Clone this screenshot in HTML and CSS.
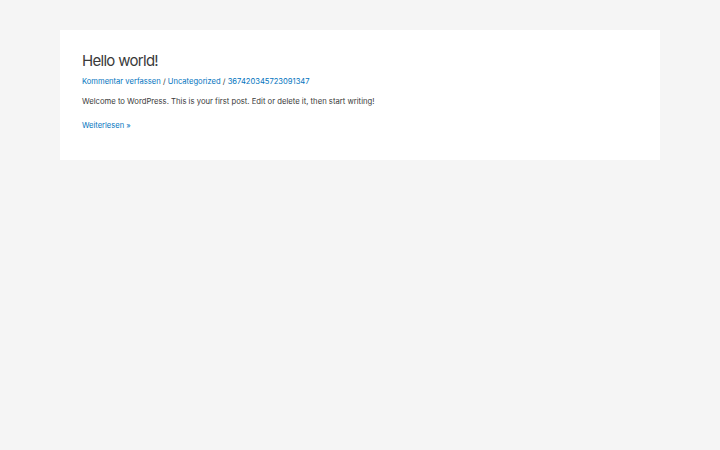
FILE: index.html
```html
<!DOCTYPE html>
<html lang="de">
<head>
<meta charset="utf-8">
<title>Hello world!</title>
<link rel="stylesheet" href="styles.css">
</head>
<body>
<main class="site">
  <article class="post">
    <h2 class="post-title">Hello world!</h2>
    <div class="post-meta"><a href="#">Kommentar verfassen</a> / <a href="#">Uncategorized</a> / <a href="#">367420345723091347</a></div>
    <p class="post-excerpt">Welcome to WordPress. This is your first post. Edit or delete it, then start writing!</p>
    <p class="read-more"><a href="#">Weiterlesen »</a></p>
  </article>
</main>
</body>
</html>
```
FILE: styles.css
```css
html, body {
  margin: 0;
  padding: 0;
}
body {
  background: #f5f5f5;
  font-family: Inter, "Open Sans", sans-serif;
  color: #3a3a3a;
  width: 720px;
  height: 450px;
}
.site {
  padding: 30px 60px;
}
.post {
  background: #fff;
  padding: 21px 22px 0;
  height: 109px;
}
.post-title {
  margin: 0;
  font-weight: 400;
  font-size: 15px;
  letter-spacing: -0.7px;
  line-height: 19px;
  color: #3a3a3a;
}
a {
  color: #0274be;
  text-decoration: none;
}
.post-meta {
  margin-top: 6px;
  font-size: 7.6px;
  line-height: 12px;
  color: #3a3a3a;
}
.post-excerpt {
  margin: 8px 0 0;
  font-size: 7.7px;
  line-height: 12px;
  color: #3a3a3a;
}
.read-more {
  margin: 12px 0 0;
  font-size: 7.55px;
  line-height: 12px;
}
```
